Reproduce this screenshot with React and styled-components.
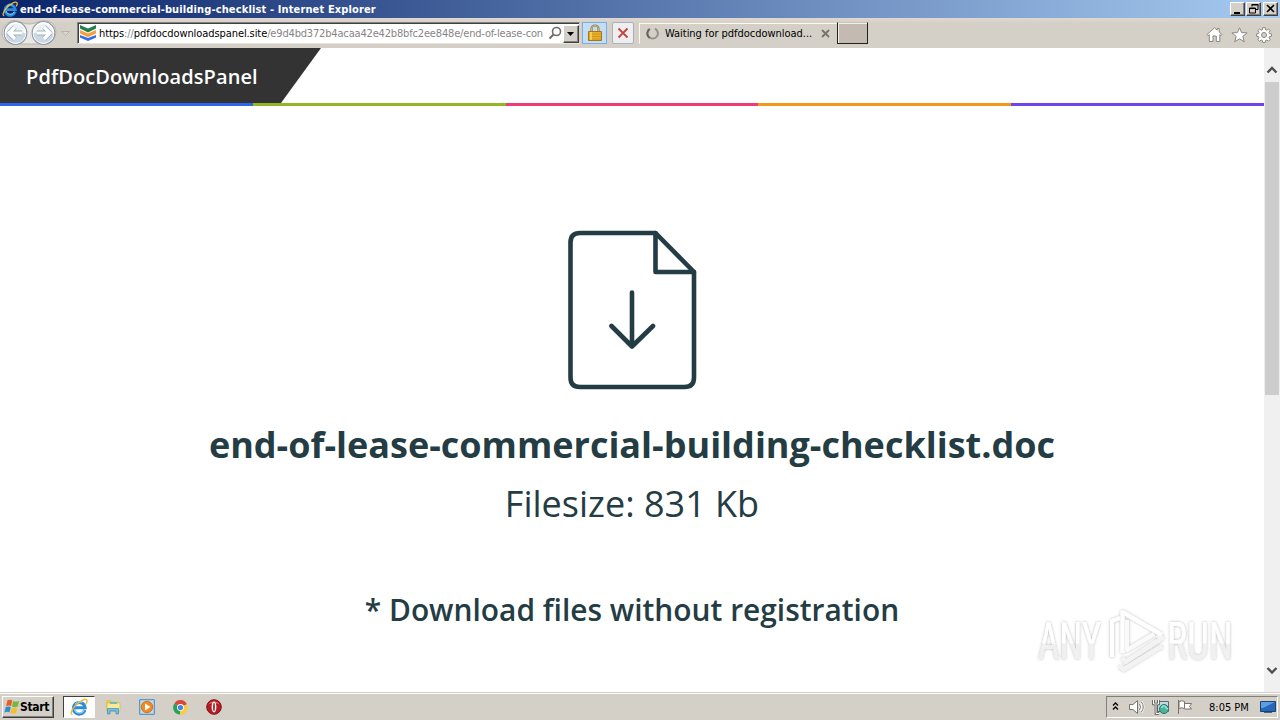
import React from 'react';
import styled, { createGlobalStyle } from 'styled-components';

const Global = createGlobalStyle`
  * { box-sizing: border-box; }
  body { margin: 0; background: #fff; overflow: hidden; }
  svg { display: block; flex: none; }
`;

const uiFont = '"DejaVu Sans Condensed", "DejaVu Sans", sans-serif';

const Screen = styled.div`
  position: relative;
  width: 1280px;
  height: 720px;
  display: flex;
  flex-direction: column;
  overflow: hidden;
  font-family: ${uiFont};
  font-stretch: condensed;
  font-size: 11px;
  color: #000;
`;

const TitleBar = styled.div`
  height: 18px;
  display: flex;
  align-items: center;
  padding: 0 2px;
  background: linear-gradient(90deg, #0a246a, #a6caf0);
`;

const TitleText = styled.div`
  flex: 1;
  padding-left: 2px;
  color: #fff;
  font-weight: bold;
  line-height: 19px;
  white-space: nowrap;
  letter-spacing: ${(p) => p.$spacing}px;
`;

const WindowButton = styled.div`
  width: 15px;
  height: 14px;
  margin-left: ${(p) => p.$gap || 0}px;
  background: #d4d0c8;
  border: 1px solid;
  border-color: #fff #404040 #404040 #fff;
  box-shadow: inset -1px -1px #808080;
`;

const Toolbar = styled.div`
  height: 30px;
  display: flex;
  align-items: flex-start;
  background: linear-gradient(#e0d8d0, #d4d0c8 5px);
`;

const NavButtons = styled.div`
  width: 77px;
  height: 30px;
`;

const AddressBar = styled.div`
  width: 503px;
  height: 22px;
  margin-top: 4px;
  display: flex;
  align-items: center;
  background: #fff;
  border: 1px solid;
  border-color: #808080 #d4d0c8 #e8e4dc #808080;
  box-shadow: inset 1px 1px #404040;
  padding-left: 2px;
`;

const Url = styled.div`
  width: 449px;
  margin-left: 3px;
  display: flex;
  white-space: nowrap;
  line-height: 18px;
  padding-top: 2px;
`;

const UrlPart = styled.span`
  color: ${(p) => (p.$strong ? '#000' : '#858585')};
  letter-spacing: ${(p) => p.$spacing}px;
`;

const DropButton = styled.div`
  width: 16px;
  height: 18px;
  margin: 1px 0 0 auto;
  background: #d4d0c8;
  border: 1px solid;
  border-color: #fff #404040 #404040 #fff;
  box-shadow: inset -1px -1px #808080;
`;

const ToolButton = styled.div`
  width: ${(p) => p.$width}px;
  height: 22px;
  margin: 4px 0 0 ${(p) => p.$gap}px;
  display: flex;
  align-items: center;
  justify-content: center;
  background: ${(p) => p.$fill};
  border: 1px solid ${(p) => p.$edge};
  border-radius: ${(p) => p.$radius || 0}px;
`;

const Tab = styled.div`
  width: 198px;
  height: 21px;
  margin: 5px 0 0 5px;
  padding: 0 6px 0 6px;
  display: flex;
  align-items: center;
  border: 1px solid;
  border-color: #fffaf0 transparent transparent #fffaf0;
`;

const TabText = styled.div`
  flex: 1;
  padding: 1px 0 0 6px;
  line-height: 18px;
  white-space: nowrap;
  letter-spacing: ${(p) => p.$spacing}px;
`;

const NewTab = styled.div`
  width: 31px;
  height: 22px;
  margin-top: 4px;
  background: #c3bbb1;
  border: 1px solid #202020;
  border-top-color: #c8c2b8;
  box-shadow: inset 1px 1px #f4f0e8;
`;

const Commands = styled.div`
  margin: 9px 8px 0 auto;
  display: flex;
  gap: 8px;
`;

const Viewport = styled.div`
  height: 644px;
  display: flex;
`;

const Page = styled.main`
  width: 1264px;
  display: flex;
  flex-direction: column;
  align-items: center;
  color: #243c43;
  font-family: "Open Sans", sans-serif;
  font-stretch: normal;
  white-space: nowrap;
`;

const SiteHeader = styled.header`
  width: 100%;
  height: 55px;
  display: flex;
`;

const Brand = styled.div`
  width: 321px;
  height: 55px;
  padding-left: 26px;
  background: #333;
  clip-path: polygon(0 0, 100% 0, 281px 100%, 0 100%);
  color: #fff;
  font-size: 20px;
  font-weight: 600;
  line-height: 57px;
  letter-spacing: 0.09px;
`;

const Stripes = styled.div`
  width: 100%;
  height: 3px;
  display: flex;
`;

const Stripe = styled.div`
  flex: 1;
  background: ${(p) => p.$color};
`;

const FileIcon = styled.div`
  margin-top: 122px;
`;

const FileName = styled.h1`
  margin: 27px 0 0;
  font-size: 36px;
  font-weight: 700;
  line-height: 56px;
`;

const FileSize = styled.p`
  margin: 4px 0 0;
  font-size: 36px;
  line-height: 54px;
`;

const Notice = styled.p`
  margin: 56px 0 0;
  font-size: 29.9px;
  font-weight: 600;
  line-height: 46px;
`;

const ScrollBar = styled.div`
  width: 16px;
  display: flex;
  flex-direction: column;
  background: #f0f0f0;
`;

const ScrollThumb = styled.div`
  width: 14px;
  height: 313px;
  margin: 0 1px auto;
  background: #cdcdcd;
`;

const TaskBar = styled.div`
  height: 28px;
  display: flex;
  align-items: flex-start;
  background: #d4d0c8;
  border-top: 1px solid #d4d0c8;
  box-shadow: inset 0 1px #fff;
  padding: 3px 2px 0;
`;

const StartButton = styled.div`
  width: 52px;
  height: 22px;
  display: flex;
  align-items: center;
  padding-left: 1px;
  border: 1px solid;
  border-color: #fff #404040 #404040 #fff;
  box-shadow: inset -1px -1px #808080;
  font-size: 12px;
  font-weight: bold;
  letter-spacing: -0.3px;
`;

const TaskButton = styled.div`
  width: 32px;
  height: 22px;
  margin-left: ${(p) => p.$gap}px;
  display: flex;
  align-items: center;
  justify-content: center;
  background: ${(p) => (p.$active ? '#fff' : 'transparent')};
  border: 1px solid;
  border-color: ${(p) => (p.$active ? '#404040 #fff #fff #404040' : 'transparent')};
`;

const Tray = styled.div`
  width: 172px;
  height: 22px;
  margin-left: auto;
  display: flex;
  align-items: center;
  border: 1px solid;
  border-color: #808080 #fff #fff #808080;
  padding-left: 4px;
`;

const Clock = styled.div`
  width: 51px;
  margin-left: 11px;
  white-space: nowrap;
  letter-spacing: ${(p) => p.$spacing}px;
`;

const Watermark = styled.div`
  position: absolute;
  left: 1028px;
  top: 600px;
`;

const IeIcon = ({ size }) => (
  <svg width={size} height={size} viewBox="0 0 16 16" fill="none">
    <path d="M13.2 10.7A5.2 5.2 0 1 1 13.4 8.6H4.2" stroke="#2d8bd8" strokeWidth="2.7" />
    <path d="M12.4 10.8A4.5 4.5 0 0 1 4 10M4.500 5.500a4.500 4.500 0 0 1 6-1.500" stroke="#8fd2f8" strokeWidth="1" />
    <path d="M2.2 14.8C.2 14.2 1 10.8 4.5 7 8.200 3 13 .2 14.700 1.500c.9.8.4 2.400-.5 3.900" stroke="#edbd35" strokeWidth="1.300" />
  </svg>
);

const NavIcon = () => (
  <svg width="77" height="30" viewBox="0 0 77 30" fill="none">
    <path d="M12 2.500Q15 2 20 4q9 4 18 0 8-3 14 1 6 5 3 14-2 5-8 7H12Q2 23 2 15T12 2.500Z" fill="#e9e8e5" stroke="#b9b5ad" />
    {[15.5, 43.5].map((x) => (
      <g key={x}>
        <circle cx={x} cy="15" r="11.300" fill="#edf1f4" stroke="#8e9ba6" strokeWidth="1.200" />
        <circle cx={x} cy="15" r="9.900" stroke="#fff" strokeWidth="1.500" />
        <path d={`M${x - 10} 15.500a10 9.500 0 0 0 20 0q-10-3-20 0`} fill="#c9d8e2" />
      </g>
    ))}
    <path d="M9 15h13M15 9l-6 6 6 6" stroke="#a3b2bf" strokeWidth="4.800" strokeLinejoin="round" />
    <path d="M9 15h13M15 9l-6 6 6 6" stroke="#fff" strokeWidth="3.200" />
    <path d="M37 15h13M44 9l6 6-6 6" stroke="#a3b2bf" strokeWidth="4.800" strokeLinejoin="round" />
    <path d="M37 15h13M44 9l6 6-6 6" stroke="#fff" strokeWidth="3.200" />
    <path d="M61.500 13.500h8l-4 4z" fill="#ddd9d2" stroke="#b7b3ab" />
  </svg>
);

const SiteIcon = () => (
  <svg width="16" height="16" viewBox="0 0 16 16">
    <path d="M0 0l8 3.500L16 0v3.500L8 7.500 0 3.500z" fill="#26804a" />
    <path d="M0 5l8 3.500L16 5v3.500L8 12.200 0 8.500z" fill="#f5a13c" />
    <path d="M0 10l8 3L16 10v2.500L8 16 0 12.500z" fill="#306be8" />
  </svg>
);

const SearchIcon = () => (
  <svg width="14" height="14" viewBox="0 0 14 14" fill="none" stroke="#6d6d6d">
    <circle cx="8.500" cy="5.500" r="4" strokeWidth="1.600" />
    <path d="M5.500 8.500L1.500 12.500" strokeWidth="2" />
  </svg>
);

const LockIcon = () => (
  <svg width="14" height="18" viewBox="0 0 14 18" fill="none">
    <path d="M3.500 8V5a3.500 3.500 0 0 1 7 0v3" stroke="#8c7840" strokeWidth="2.200" />
    <path d="M3.500 8V5a3.500 3.500 0 0 1 7 0v3" stroke="#d9cc9d" strokeWidth=".8" />
    <path d="M.5 7.500h13v9H.5z" fill="#e9b02a" stroke="#a87512" />
    <path d="M1 10h12M1 12.500h12M1 15h12" stroke="#c98f18" strokeWidth=".8" />
    <path d="M3 8v8" stroke="#ffdc62" strokeWidth="1.500" />
  </svg>
);

const StopIcon = () => (
  <svg width="12" height="12" viewBox="0 0 12 12" stroke="#c3443e" strokeWidth="1.800">
    <path d="M1.500 1.500l9 9M10.500 1.500l-9 9" />
  </svg>
);

const SpinnerIcon = () => (
  <svg width="13" height="13" viewBox="0 0 13 13" fill="none" strokeWidth="2">
    <path d="M9 1.700A5.200 5.200 0 1 1 4 1.900" stroke="#96918a" />
    <path d="M3.500 2.200a5.200 5.200 0 0 0 0 8.600" stroke="#66625c" />
  </svg>
);

const CommandIcons = () => (
  <Commands>
    <svg width="17" height="15" viewBox="0 0 17 15" fill="#fff" stroke="#8b8882">
      <path d="M1 7.500L8.500.8l2.700 2.400V1.500h2v3.500L16 7.500l-1 1.200-1.200-1v6.800h-3.500V9H7v5.500H3.300V7.700L2 8.700z" />
    </svg>
    <svg width="17" height="16" viewBox="0 0 17 16" fill="#fff" stroke="#8b8882">
      <path d="M8.500.8l2.100 4.800 5.500.3-4.300 3.500 1.500 5.400-4.800-3-4.800 3 1.500-5.400L.9 5.900l5.500-.3z" />
    </svg>
    <svg width="16" height="16" viewBox="0 0 16 16" fill="#fff" stroke="#8b8882">
      <path d="M6.700.7h2.600l.3 2 1.200.5 1.700-1.200 1.700 1.700L13 5.400l.4 1.200 2 .3v2.400l-2 .3-.4 1.200 1.200 1.700-1.700 1.700-1.700-1.200-1.200.5-.3 1.900H6.700l-.3-1.900-1.200-.5-1.700 1.200-1.700-1.700L3 10.800l-.4-1.200-2-.3V6.900l2-.3L3 5.400 1.800 3.700 3.500 2l1.700 1.200 1.200-.5z" />
      <circle cx="8" cy="8" r="2.500" fill="#d4d0c8" />
    </svg>
  </Commands>
);

const DownloadFile = () => (
  <svg width="130" height="162" viewBox="0 0 130 162" fill="none" stroke="#243c43" strokeWidth="4.600" strokeLinejoin="round" strokeLinecap="round">
    <path d="M88.500 5H13Q3.500 5 3.500 14.500v135Q3.500 159 13 159h104.500q9.500 0 9.500-9.500V44z" />
    <path d="M88.500 5v39H127M65 64.500v54M44.500 98L65 118.500 86 98" />
  </svg>
);

const ScrollArrow = ({ up, height }) => (
  <svg width="16" height={height} viewBox={`0 0 16 ${height}`} fill="none" stroke="#505050" strokeWidth="2.400">
    <path d={up ? 'M3.500 24.500L8 20l4.500 4.500' : `M3.500 ${height - 24}l4.500 4.500 4.500-4.500`} />
  </svg>
);

const StartFlag = () => (
  <svg width="16" height="16" viewBox="0 0 16 16">
    <path d="M3.300 1.500q2.500-1.500 5 0L7.100 7q-2.200-1.200-5 0z" fill="#e95e28" />
    <path d="M9.200 2q2.500 1.300 6 0l-1.400 5.600q-3.300 1.300-5.800 0z" fill="#76b83c" />
    <path d="M1.800 8.100q2.500-1.200 5 0l-1.400 5.300q-2.200-1.200-5 0z" fill="#318bd0" />
    <path d="M7.700 8.700q2.500 1.200 5.800 0l-1.400 5.300q-3.300 1.300-5.800 0z" fill="#f4bf2d" />
  </svg>
);

const FolderIcon = () => (
  <svg width="16" height="16" viewBox="0 0 16 16">
    <path d="M1 1h5l1 1.500h7V12H1z" fill="#e6c65c" />
    <path d="M2 4h13v8H2z" fill="#f8e99c" stroke="#ccb35a" strokeWidth=".6" />
    <path d="M5 3h7v2H5z" fill="#6dc0b4" />
    <path d="M2.500 15V9.500h11V15H11v-3H5v3z" fill="#73bddf" stroke="#408cb5" strokeWidth=".7" />
  </svg>
);

const PlayerIcon = () => (
  <svg width="16" height="16" viewBox="0 0 16 16">
    <path d="M.7.700h14.600v14.600H.700z" fill="#b9daf2" stroke="#408aca" />
    <circle cx="8" cy="8" r="5.700" fill="#f28b1c" stroke="#d9741d" />
    <path d="M6 4.500v7L11.500 8z" fill="#fff" />
  </svg>
);

const ChromeIcon = () => (
  <svg width="15" height="15" viewBox="0 0 16 16">
    <path d="M8 8L1.500 3.700A7.500 7.500 0 0 1 14.800 4.500z" fill="#dc4638" />
    <path d="M8 8L1.500 3.700A7.500 7.500 0 0 0 7.500 15.500z" fill="#28a15b" />
    <path d="M8 8l6.800-3.500A7.500 7.500 0 0 1 7.500 15.500z" fill="#fbcd3d" />
    <circle cx="8" cy="8" r="3.700" fill="#fff" />
    <circle cx="8" cy="8" r="2.800" fill="#4586dc" />
  </svg>
);

const OperaIcon = () => (
  <svg width="16" height="16" viewBox="0 0 16 16">
    <circle cx="8" cy="8" r="7.300" fill="#b31c20" stroke="#7f1519" />
    <path d="M2 5.500Q8-1 14 5.500 8 3 2 5.500" fill="#e06a68" />
    <ellipse cx="8" cy="8" rx="2.400" ry="5.400" fill="#fff" />
    <ellipse cx="8" cy="8" rx=".9" ry="4.300" fill="#b31c20" />
  </svg>
);

const TrayIcons = () => (
  <svg width="87" height="20" viewBox="0 0 87 20" fill="none">
    <path d="M2 8.500L4.500 6 7 8.500M2 12.500l2.500-2.500L7 12.500" stroke="#000" strokeWidth="1.300" />
    <g stroke="#77736d">
      <path d="M18.500 7.500H22l4.500-4v13l-4.500-4h-3.500z" fill="#fff" />
      <path d="M28.500 7q2 3 0 6M30.500 5q3.500 5 0 10" stroke="#fff" strokeWidth="2.500" />
      <path d="M28.500 7q2 3 0 6M30.500 5q3.500 5 0 10" />
    </g>
    <path d="M46.500 4.500h11v10h-11z" fill="#bddbe2" stroke="#666" />
    <path d="M42.500 3v4h5V3M45 8v8.500h3" stroke="#555" strokeWidth="2.600" />
    <path d="M42.500 3v4h5V3M45 8v8.500h3" stroke="#fff" />
    <circle cx="53" cy="12" r="4.500" fill="#4ab39a" stroke="#26796e" />
    <path d="M50.500 11q2-4 4-1t2 1" stroke="#9ce0dc" strokeWidth="1.500" />
    <path d="M67.500 3v14M68 4.500q3-1.500 5.500 0v7q-3-1.500-5.500 0zM73.500 6.500h7l-2 3 2 2.500h-7" fill="#fff" stroke="#77736d" />
  </svg>
);

const MonitorIcon = () => (
  <svg width="16" height="16" viewBox="0 0 16 16">
    <path d="M.5 2.500h15v10H.500z" fill="#2467bd" stroke="#1d426f" />
    <path d="M1 3h14L3 9H1z" fill="#5d9ee2" />
    <path d="M4 13.500h8" stroke="#536373" />
  </svg>
);

const WatermarkArt = () => (
  <svg width="220" height="80" viewBox="0 0 220 80">
    <defs>
      <filter id="soft" x="-10%" y="-20%" width="120%" height="140%">
        <feDropShadow dx="0" dy="0" stdDeviation="1.600" floodColor="#000" floodOpacity=".3" />
      </filter>
      <linearGradient id="shade" x1="0" y1="0" x2="0" y2="1">
        <stop offset=".52" stopColor="#fff" />
        <stop offset=".54" stopColor="#f0f0f0" />
      </linearGradient>
    </defs>
    <g filter="url(#soft)" fill="url(#shade)" fontFamily="Roboto, sans-serif" fontSize="52">
      <text x="10" y="59" textLength="102" lengthAdjust="spacingAndGlyphs" transform="translate(3.800) scale(.62 1)">ANY</text>
      <text x="0" y="59" textLength="106" lengthAdjust="spacingAndGlyphs" transform="translate(139) scale(.62 1)">RUN</text>
    </g>
    <g filter="url(#soft)" fill="none" stroke="#f3f3f3" strokeWidth="4" strokeLinejoin="round">
      <path d="M91.500 66l4 3.500L134 46" />
      <path d="M94 58l4 3.500L134 38l-5-2.500" />
      <path d="M99 20v30l27-16" stroke="#fafafa" />
      <path d="M92 18l-8 3v36" stroke="#fff" />
      <path d="M94.500 53V12L134 35" stroke="#fff" />
    </g>
  </svg>
);

export default function App() {
  return (
    <Screen>
      <Global />
      <TitleBar>
        <IeIcon size={16} />
        <TitleText $spacing={0.13}>end-of-lease-commercial-building-checklist - Internet Explorer</TitleText>
        <WindowButton>
          <svg width="13" height="12"><path d="M3 9h6v2H3z" /></svg>
        </WindowButton>
        <WindowButton $gap={1}>
          <svg width="13" height="12" fill="none" stroke="#000"><path d="M5 3.500V1.500h6v5H9M4.500 2h7M2.500 5h6v5h-6zM2 5.500h7" /></svg>
        </WindowButton>
        <WindowButton $gap={2}>
          <svg width="13" height="12" stroke="#000" strokeWidth="1.600"><path d="M3 2l7 7M10 2L3 9" /></svg>
        </WindowButton>
      </TitleBar>
      <Toolbar>
        <NavButtons><NavIcon /></NavButtons>
        <AddressBar>
          <SiteIcon />
          <Url>
            <UrlPart $strong $spacing={-0.08}>https</UrlPart>
            <UrlPart $spacing={-0.08}>://</UrlPart>
            <UrlPart $strong $spacing={-0.08}>pdfdocdownloadspanel.site</UrlPart>
            <UrlPart $spacing={-0.17}>/e9d4bd372b4acaa42e42b8bfc2ee848e/end-of-lease-con</UrlPart>
          </Url>
          <SearchIcon />
          <DropButton>
            <svg width="14" height="16"><path d="M3 6h7l-3.500 4z" /></svg>
          </DropButton>
        </AddressBar>
        <ToolButton $width={25} $gap={2} $fill="#c5dcf5" $edge="#79aee5"><LockIcon /></ToolButton>
        <ToolButton $width={22} $gap={5} $fill="#eeedf0" $edge="#a9b1bc" $radius={2}><StopIcon /></ToolButton>
        <Tab>
          <SpinnerIcon />
          <TabText $spacing={-0.03}>Waiting for pdfdocdownload...</TabText>
          <svg width="9" height="9" stroke="#77736d" strokeWidth="1.800"><path d="M1 1l7 7M8 1L1 8" /></svg>
        </Tab>
        <NewTab />
        <CommandIcons />
      </Toolbar>
      <Viewport>
        <Page>
          <SiteHeader><Brand>PdfDocDownloadsPanel</Brand></SiteHeader>
          <Stripes>
            {['#2f65ee', '#91b822', '#ee3d72', '#f2961c', '#7043ee'].map((c) => <Stripe key={c} $color={c} />)}
          </Stripes>
          <FileIcon><DownloadFile /></FileIcon>
          <FileName>end-of-lease-commercial-building-checklist.doc</FileName>
          <FileSize>Filesize: 831 Kb</FileSize>
          <Notice>* Download files without registration</Notice>
        </Page>
        <ScrollBar>
          <ScrollArrow up height={34} />
          <ScrollThumb />
          <ScrollArrow height={44} />
        </ScrollBar>
      </Viewport>
      <TaskBar>
        <StartButton><StartFlag />Start</StartButton>
        <TaskButton $active $gap={9}><IeIcon size={18} /></TaskButton>
        <TaskButton $gap={2}><FolderIcon /></TaskButton>
        <TaskButton $gap={2}><PlayerIcon /></TaskButton>
        <TaskButton $gap={1}><ChromeIcon /></TaskButton>
        <TaskButton $gap={2}><OperaIcon /></TaskButton>
        <Tray>
          <TrayIcons />
          <Clock $spacing={0}>8:05 PM</Clock>
          <MonitorIcon />
        </Tray>
      </TaskBar>
      <Watermark><WatermarkArt /></Watermark>
    </Screen>
  );
}
